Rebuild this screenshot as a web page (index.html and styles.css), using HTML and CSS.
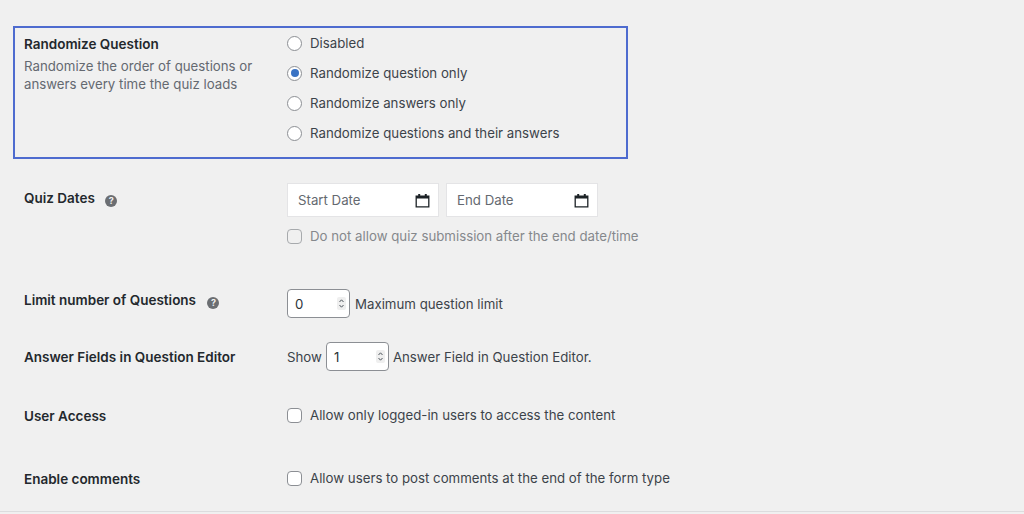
FILE: index.html
```html
<!DOCTYPE html>
<html lang="en">
<head>
    <meta charset="UTF-8">
    <meta name="viewport" content="width=device-width, initial-scale=1.0">
    <title>Quiz Settings</title>
    <link rel="stylesheet" href="styles.css">
</head>
<body>
    <div class="settings">
        <!-- Highlighted option -->
        <div class="row row-random">
            <div class="label">
                <h4>Randomize Question</h4>
                <p>Randomize the order of questions or answers every time the quiz loads</p>
            </div>
            <div class="options">
                <label class="option"><span class="radio"></span>Disabled</label>
                <label class="option"><span class="radio checked"></span>Randomize question only</label>
                <label class="option"><span class="radio"></span>Randomize answers only</label>
                <label class="option"><span class="radio"></span>Randomize questions and their answers</label>
            </div>
        </div>

        <div class="row row-dates">
            <div class="label">
                <h4>Quiz Dates <span class="help">?</span></h4>
            </div>
            <div>
                <div class="dates">
                    <div class="date">
                        <span>Start Date</span>
                        <svg width="15" height="15" viewBox="0 0 15 15"><path d="M1.2 3.2h12.6v10.6H1.2z" fill="none" stroke="#1d2327" stroke-width="1.3"/><path d="M1 3h13v2.4H1zM3.2 1h2v2.5h-2zM9.8 1h2v2.5h-2z" fill="#1d2327"/></svg>
                    </div>
                    <div class="date">
                        <span>End Date</span>
                        <svg width="15" height="15" viewBox="0 0 15 15"><path d="M1.2 3.2h12.6v10.6H1.2z" fill="none" stroke="#1d2327" stroke-width="1.3"/><path d="M1 3h13v2.4H1zM3.2 1h2v2.5h-2zM9.8 1h2v2.5h-2z" fill="#1d2327"/></svg>
                    </div>
                </div>
                <label class="option muted"><span class="check"></span>Do not allow quiz submission after the end date/time</label>
            </div>
        </div>

        <div class="row row-limit">
            <div class="label">
                <h4>Limit number of Questions <span class="help">?</span></h4>
            </div>
            <div class="inline">
                <div class="number"><span>0</span><svg class="spin" width="9" height="13" viewBox="0 0 9 13"><rect width="9" height="13" rx="2" fill="#efefef"/><path d="M2.5 5l2-2.2 2 2.2M2.5 8l2 2.2 2-2.2" fill="none" stroke="#50575e" stroke-width="1"/></svg></div>
                Maximum question limit
            </div>
        </div>

        <div class="row row-fields">
            <div class="label">
                <h4>Answer Fields in Question Editor</h4>
            </div>
            <div class="inline">
                Show
                <div class="number"><span>1</span><svg class="spin" width="9" height="13" viewBox="0 0 9 13"><rect width="9" height="13" rx="2" fill="#efefef"/><path d="M2.5 5l2-2.2 2 2.2M2.5 8l2 2.2 2-2.2" fill="none" stroke="#50575e" stroke-width="1"/></svg></div>
                Answer Field in Question Editor.
            </div>
        </div>

        <div class="row row-access">
            <div class="label">
                <h4>User Access</h4>
            </div>
            <label class="option"><span class="check"></span>Allow only logged-in users to access the content</label>
        </div>

        <div class="row row-comments">
            <div class="label">
                <h4>Enable comments</h4>
            </div>
            <label class="option"><span class="check"></span>Allow users to post comments at the end of the form type</label>
        </div>
    </div>
</body>
</html>
```

FILE: styles.css
```css
body {
    margin: 0;
    background-color: #f0f0f0;
    color: #3c434a;
    font-family: Inter, "Liberation Sans", sans-serif;
    font-size: 13.25px;
    overflow: hidden;
}

.settings {
    height: 512px;
    box-sizing: border-box;
    padding: 26px 0 0 13px;
    border-bottom: 1px solid #dcdcde;
}

.row {
    display: grid;
    grid-template-columns: 263px 1fr;
    box-sizing: border-box;
    padding-left: 11px;
}

h4 {
    margin: 0;
    color: #23282d;
    font-size: 13.5px;
    font-weight: 600;
    line-height: 20px;
}

.label p {
    margin: 3px 0 0;
    color: #646970;
    line-height: 18px;
    width: 240px;
}

.row-random {
    width: 615px;
    height: 133px;
    padding: 6px 0 0 9px;
    border: 2px solid #4e6bcf;
}

.row-dates {
    margin-top: 23px;
    height: 102px;
    padding-top: 6px;
}

.row-limit {
    height: 63px;
    padding-top: 6px;
}

.row-fields {
    height: 59px;
}

.row-access {
    height: 63px;
}

.row-access .option, .row-comments .option {
    margin-top: -1px;
}

.options {
    display: flex;
    flex-direction: column;
    gap: 10px;
    margin-top: -1px;
}

.option {
    display: flex;
    align-items: center;
    gap: 8px;
    height: 20px;
    white-space: nowrap;
}

.radio, .check {
    flex: none;
    box-sizing: border-box;
    width: 15px;
    height: 15px;
    background: #fff;
    border: 1px solid #8c8f94;
}

.radio {
    border-radius: 50%;
    display: flex;
    align-items: center;
    justify-content: center;
}

.radio.checked::before {
    content: "";
    width: 8px;
    height: 8px;
    border-radius: 50%;
    background: #3a73c4;
}

.check {
    border-radius: 4px;
}

.muted {
    color: #85888c;
    margin-top: 9px;
}

.muted .check {
    background: #f0f0f0;
    border-color: #a7aaad;
}

.help {
    display: inline-flex;
    align-items: center;
    justify-content: center;
    width: 12px;
    height: 12px;
    margin-left: 7px;
    border-radius: 50%;
    background: #6b6e72;
    color: #f0f0f0;
    font-size: 9px;
    font-weight: 700;
    vertical-align: -1px;
}

.row-limit .help {
    margin-left: 8px;
}

.dates {
    display: flex;
    gap: 7px;
    margin-top: -5px;
}

.date {
    display: flex;
    align-items: center;
    justify-content: space-between;
    width: 152px;
    height: 34px;
    box-sizing: border-box;
    padding: 0 8px 0 10px;
    background: #fff;
    border: 1px solid #e4e4e6;
    color: #646970;
}

.inline {
    display: flex;
    align-items: center;
    gap: 5px;
    height: 29px;
    margin-top: -1px;
    white-space: nowrap;
}

.row-fields .inline {
    gap: 4px;
    margin-top: -5px;
}

.number {
    display: flex;
    align-items: center;
    justify-content: space-between;
    width: 63px;
    height: 29px;
    box-sizing: border-box;
    padding: 0 3px 0 7px;
    background: #fff;
    border: 1px solid #8c8f94;
    border-radius: 4px;
    color: #2c3338;
}
```
